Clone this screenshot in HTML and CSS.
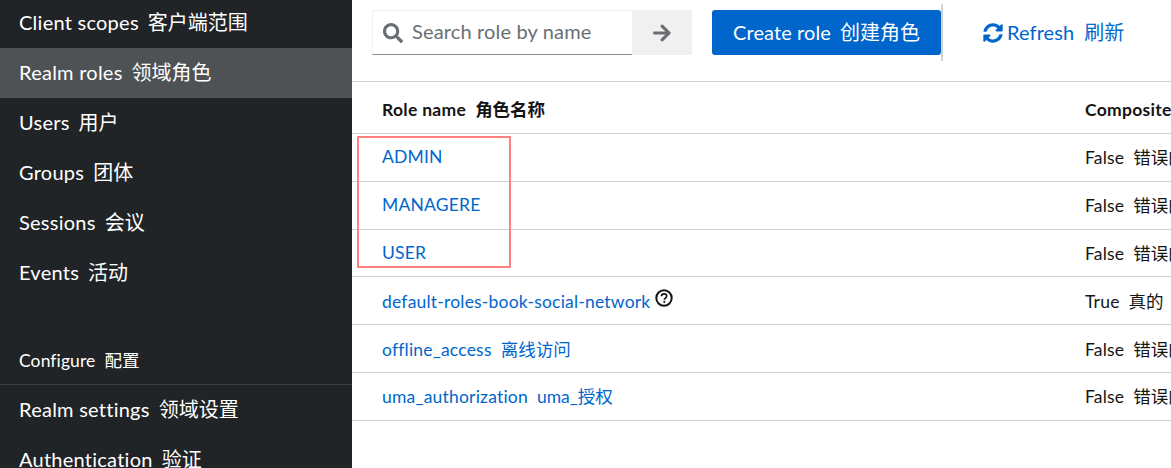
FILE: index.html
```html
<!DOCTYPE html>
<html lang="en">
<head>
<meta charset="utf-8">
<title>Realm roles</title>
<link rel="stylesheet" href="styles.css">
</head>
<body>
<div class="page">
  <nav class="sidebar">
    <ul class="nav-list nav-first">
      <li class="nav-item">Client scopes<span class="zh">客户端范围</span></li>
      <li class="nav-item active">Realm roles<span class="zh">领域角色</span></li>
      <li class="nav-item">Users<span class="zh">用户</span></li>
      <li class="nav-item">Groups<span class="zh">团体</span></li>
      <li class="nav-item">Sessions<span class="zh">会议</span></li>
      <li class="nav-item">Events<span class="zh">活动</span></li>
    </ul>
    <div class="nav-title">Configure<span class="zh">配置</span></div>
    <ul class="nav-list">
      <li class="nav-item">Realm settings<span class="zh">领域设置</span></li>
      <li class="nav-item">Authentication<span class="zh">验证</span></li>
    </ul>
  </nav>
  <main class="main">
    <div class="toolbar">
      <div class="search">
        <svg class="search-icon" viewBox="0 0 512 512" aria-hidden="true"><path d="M505 442.700L405.300 343c-4.500-4.500-10.600-7-17-7H372c27.600-35.300 44-79.700 44-128C416 93.100 322.900 0 208 0S0 93.100 0 208s93.100 208 208 208c48.300 0 92.700-16.400 128-44v16.300c0 6.400 2.500 12.500 7 17l99.700 99.700c9.400 9.400 24.600 9.400 33.900 0l28.300-28.300c9.400-9.400 9.400-24.600.1-34zM208 336c-70.700 0-128-57.200-128-128 0-70.700 57.200-128 128-128 70.700 0 128 57.200 128 128 0 70.700-57.200 128-128 128z"/></svg>
        <span class="placeholder">Search role by name</span>
      </div>
      <button class="go" type="button" aria-label="Search">
        <svg viewBox="0 0 448 512" aria-hidden="true"><path d="M190.500 66.900l22.200-22.200c9.400-9.400 24.600-9.400 33.900 0L441 239c9.400 9.400 9.400 24.600 0 33.900L246.600 467.300c-9.400 9.400-24.600 9.400-33.900 0l-22.200-22.200c-9.500-9.500-9.300-25 .4-34.300L311.400 296H24c-13.300 0-24-10.700-24-24v-32c0-13.300 10.700-24 24-24h287.400L190.900 101.200c-9.800-9.300-10-24.800-.4-34.300z"/></svg>
      </button>
      <button class="create" type="button">Create role<span class="zh">创建角色</span></button>
      <div class="divider"></div>
      <a class="refresh">
        <svg viewBox="0 0 512 512" aria-hidden="true"><path d="M370.720 133.280C339.458 104.008 298.888 87.962 255.848 88c-77.458.068-144.328 53.178-162.791 126.850-1.344 5.363-6.122 9.150-11.651 9.150H24.103c-7.498 0-13.194-6.807-11.807-14.176C33.933 94.924 134.813 8 256 8c66.448 0 126.791 26.136 171.315 68.685L463.030 40.970C478.149 25.851 504 36.559 504 57.941V192c0 13.255-10.745 24-24 24H345.941c-21.382 0-32.090-25.851-16.971-40.971l41.750-41.749zM32 296h134.059c21.382 0 32.090 25.851 16.971 40.971l-41.750 41.750c31.262 29.273 71.835 45.319 114.876 45.280 77.418-.070 144.315-53.144 162.787-126.849 1.344-5.363 6.122-9.150 11.651-9.150h57.304c7.498 0 13.194 6.807 11.807 14.176C478.067 417.076 377.187 504 256 504c-66.448 0-126.791-26.136-171.315-68.685L48.970 471.030C33.851 486.149 8 475.441 8 454.059V320c0-13.255 10.745-24 24-24z"/></svg>
        <span class="refresh-label">Refresh<span class="zh">刷新</span></span>
      </a>
    </div>
    <table class="roles">
      <thead>
        <tr><th class="col-name">Role name<span class="zh">角色名称</span></th><th>Composite<span class="zh">合成的</span></th></tr>
      </thead>
      <tbody>
        <tr><td><a class="link">ADMIN</a></td><td>False<span class="zh">错误的</span></td></tr>
        <tr><td><a class="link">MANAGERE</a></td><td>False<span class="zh">错误的</span></td></tr>
        <tr><td><a class="link">USER</a></td><td>False<span class="zh">错误的</span></td></tr>
        <tr><td><a class="link">default-roles-book-social-network</a><svg class="help" viewBox="0 0 18 18" aria-hidden="true"><circle cx="9" cy="9" r="7.700" fill="none" stroke="#151515" stroke-width="2"/><path d="M6.400 7.200C6.500 5.700 7.600 4.900 9.100 4.900c1.600 0 2.600.9 2.600 2.200 0 1.100-.6 1.600-1.400 2.100-.7.400-.9.700-.9 1.500" fill="none" stroke="#151515" stroke-width="1.700"/><circle cx="9.300" cy="12.800" r="1.100" fill="#151515"/></svg></td><td>True<span class="zh">真的</span></td></tr>
        <tr><td><a class="link">offline_access<span class="zh">离线访问</span></a></td><td>False<span class="zh">错误的</span></td></tr>
        <tr><td><a class="link">uma_authorization<span class="zh">uma_授权</span></a></td><td>False<span class="zh">错误的</span></td></tr>
      </tbody>
    </table>
  </main>
  <div class="highlight"></div>
</div>
</body>
</html>
```

FILE: styles.css
```css
* { box-sizing: border-box; }
html, body { margin: 0; height: 100%; overflow: hidden; background: #fff; }
body { font-family: "Lato", "Noto Sans CJK SC", sans-serif; color: #151515; }
.page { position: relative; display: flex; width: 1171px; height: 468px; overflow: hidden; }
.zh { margin-left: 9px; letter-spacing: 0; }

.sidebar { flex: 0 0 352px; background: #212427; color: #fff; overflow: hidden; font-size: 20px; }
.nav-list { list-style: none; margin: 0; padding: 0; }
.nav-first { margin-top: -2px; }
.nav-item { height: 50px; line-height: 49px; padding-left: 19px; white-space: nowrap; letter-spacing: .25px; }
.nav-item.active { background: #4f5255; }
.nav-title { margin-top: 39px; height: 48px; padding: 11px 0 0 19px; font-size: 17.500px; line-height: 26px; letter-spacing: .1px; border-bottom: 1px solid #3c3f42; }

.main { flex: 1; min-width: 0; overflow: hidden; }
.toolbar { display: flex; align-items: center; height: 82px; padding: 0 0 16px 20px; border-bottom: 1px solid #d2d2d2; font-size: 20px; }
.search { display: flex; align-items: center; width: 260px; height: 45px; padding-left: 10px; border: 1px solid #f0f0f0; border-bottom-color: #8a8d90; border-right: 0; }
.search-icon { width: 20px; height: 20px; fill: #6a6e73; }
.placeholder { margin: 0 0 3px 9px; color: #6a6e73; white-space: nowrap; letter-spacing: .15px; }
.go { display: flex; align-items: center; justify-content: center; width: 60px; height: 45px; padding: 0; border: 0; background: #f0f0f0; }
.go svg { width: 18px; height: 20px; fill: #6a6e73; }
.create { width: 229px; height: 45px; margin-left: 20px; padding: 0 0 2px; border: 0; border-radius: 3px; background: #0066cc; color: #fff; font: inherit; white-space: nowrap; letter-spacing: .1px; }
.divider { width: 2px; height: 57px; background: #d2d2d2; }
.refresh { display: flex; align-items: center; margin-left: 40px; color: #0066cc; white-space: nowrap; }
.refresh svg { width: 20px; height: 20px; margin-right: 4px; fill: #0066cc; }
.refresh-label { margin-bottom: 2px; letter-spacing: .1px; }
.refresh-label .zh { margin-left: 10px; }

.roles { width: 1000px; table-layout: fixed; border-collapse: collapse; font-size: 17.500px; white-space: nowrap; letter-spacing: .2px; }
.roles th, .roles td { padding: 0 0 1px 30px; height: 47.800px; text-align: left; border-bottom: 1px solid #d2d2d2; overflow: hidden; }
.roles th { height: 51.600px; padding: 2px 0 0 30px; font-weight: 700; letter-spacing: .3px; }
.roles th.col-name, .roles td:first-child { width: 703px; }
.link { color: #0066cc; }
.help { width: 18px; height: 18px; margin-left: 5px; vertical-align: 1px; }

.highlight { position: absolute; left: 357px; top: 136px; width: 154px; height: 132px; border: 2px solid #ff8080; border-radius: 1px; }
```
